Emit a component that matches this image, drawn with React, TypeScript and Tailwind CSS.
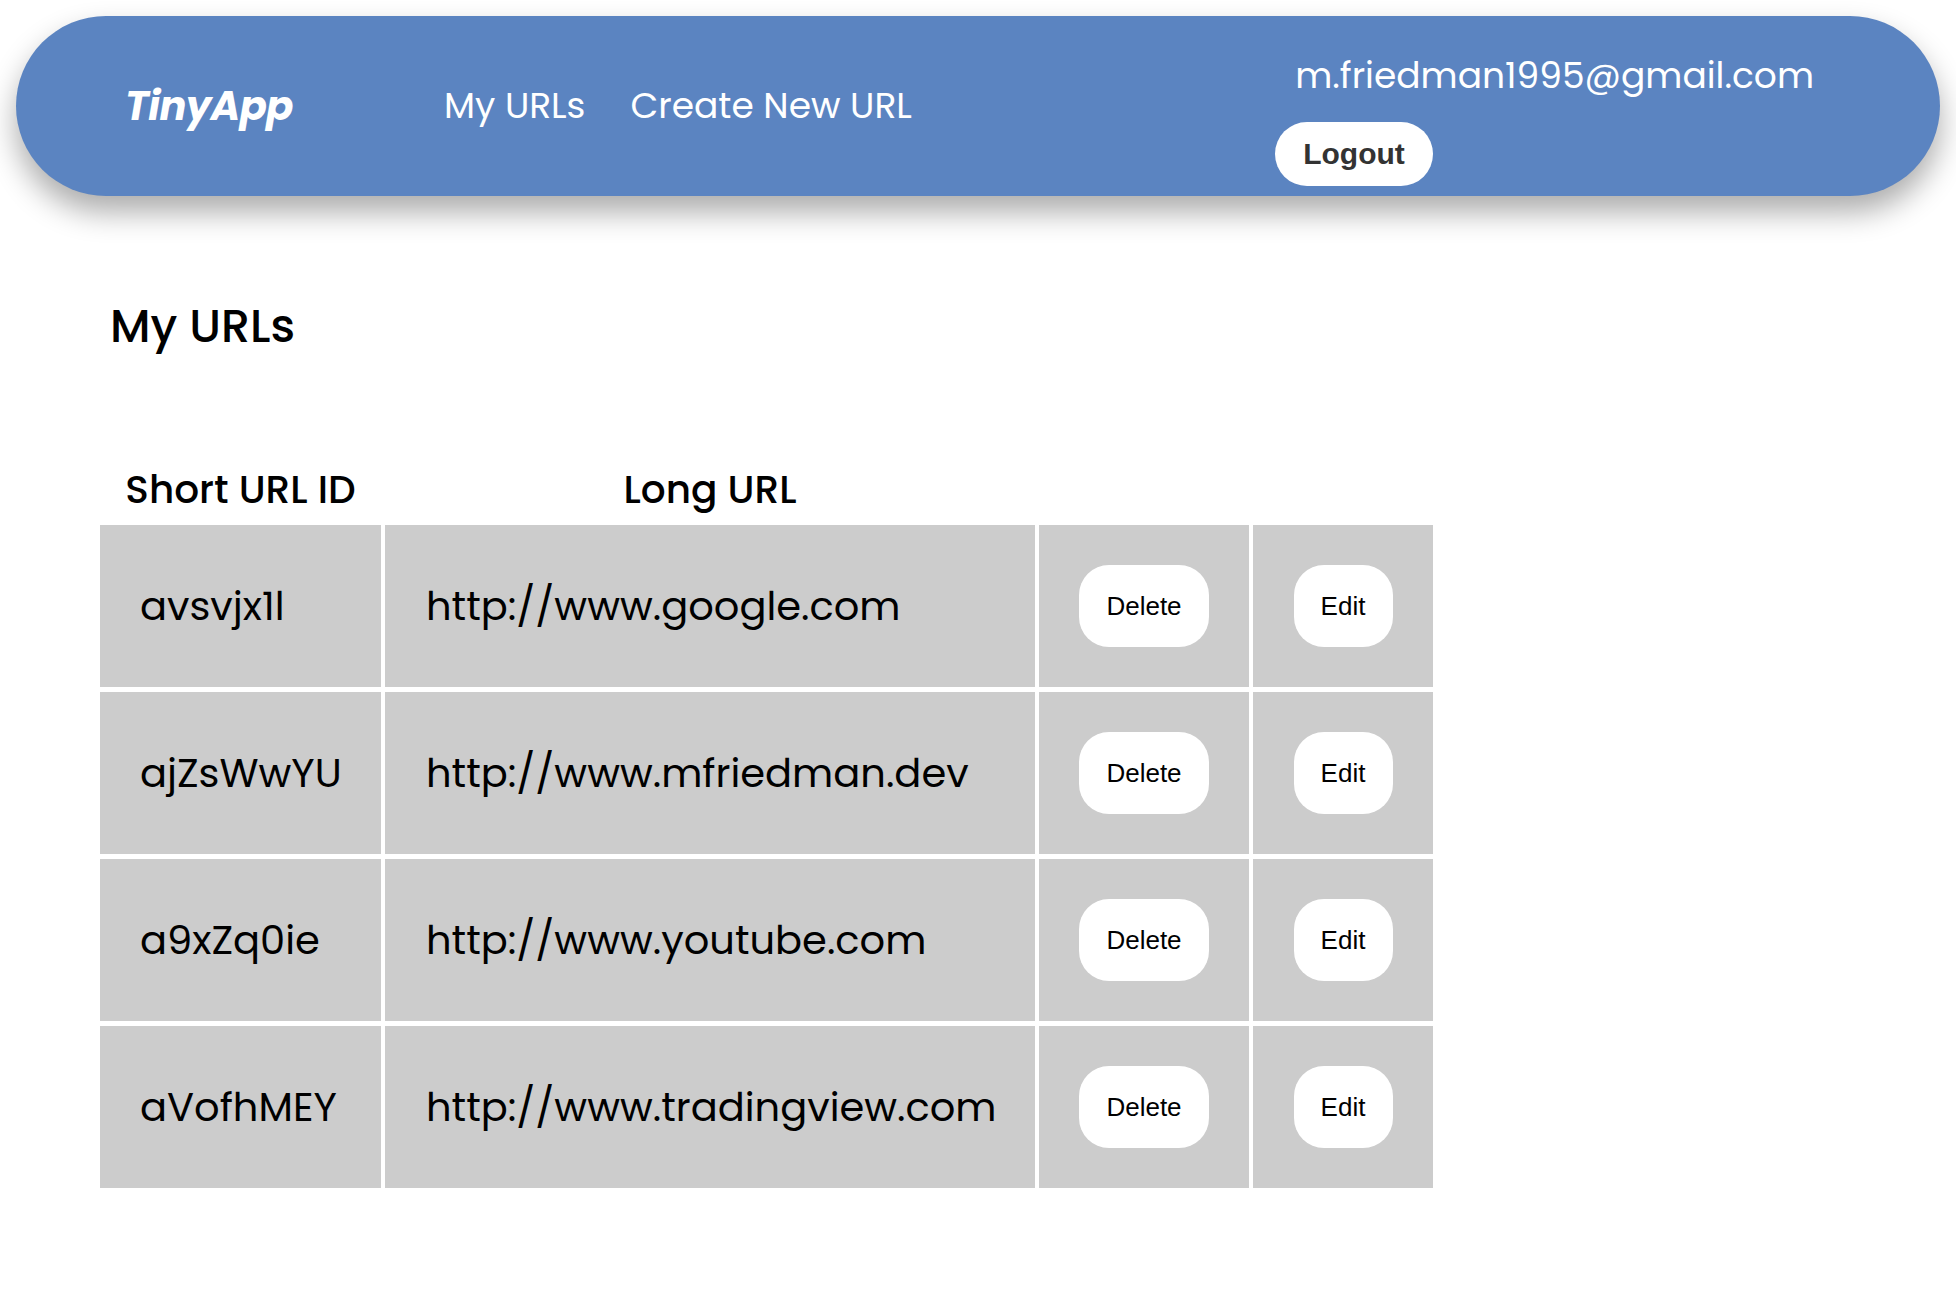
import React from "react";

const rows = [
  { id: "avsvjx1l", url: "http://www.google.com" },
  { id: "ajZsWwYU", url: "http://www.mfriedman.dev" },
  { id: "a9xZq0ie", url: "http://www.youtube.com" },
  { id: "aVofhMEY", url: "http://www.tradingview.com" },
];

const poppins = { fontFamily: '"Poppins", "Open Sans", sans-serif' };
const arial = { fontFamily: '"Liberation Sans", Arial, sans-serif' };

export default function App() {
  return (
    <div className="min-h-[1308px] w-full bg-white text-black" style={poppins}>
      <nav className="mx-4 mt-4 flex h-[180px] items-center rounded-full bg-[#5b84c1] pl-[109px] pr-[126px] text-white shadow-[0_16px_30px_rgba(0,0,0,0.33)]">
        <div className="w-[319px] text-[40px] font-bold italic tracking-[-0.5px]">TinyApp</div>
        <div className="flex items-center gap-[45px] text-[36px]">
          <a href="#">My URLs</a>
          <a href="#">Create New URL</a>
        </div>
        <div className="ml-auto flex flex-col items-start pt-[29px]">
          <div className="pl-[20px] text-[36px] leading-[44px] -translate-y-[2px]">m.friedman1995@gmail.com</div>
          <button
            className="mt-[22px] h-[64px] rounded-full bg-white px-[28px] text-[30px] font-bold text-[#333]"
            style={arial}
          >
            Logout
          </button>
        </div>
      </nav>

      <main className="pl-[96px]">
        <h1 className="mt-[102px] pl-[14px] text-[46px] font-medium leading-[56px]">My URLs</h1>
        <table className="mt-[101px] border-separate border-spacing-x-[4px] border-spacing-y-[5px]">
          <thead>
            <tr className="h-[60px] text-[39px]">
              <th className="w-[281px] p-0 text-center font-medium">Short URL ID</th>
              <th className="w-[650px] p-0 text-center font-medium">Long URL</th>
              <th className="w-[210px] p-0"></th>
              <th className="w-[180px] p-0"></th>
            </tr>
          </thead>
          <tbody>
            {rows.map((r) => (
              <tr key={r.id} className="h-[162px] text-[40px]">
                <td className="bg-[#cccccc] pl-[40px] pr-[10px] text-left">{r.id}</td>
                <td className="bg-[#cccccc] pl-[41px] pr-[10px] text-left">{r.url}</td>
                <td className="bg-[#cccccc] text-center">
                  <button
                    className="h-[82px] w-[130px] rounded-[30px] bg-white text-[26px] text-black"
                    style={arial}
                  >
                    Delete
                  </button>
                </td>
                <td className="bg-[#cccccc] text-center">
                  <button
                    className="h-[82px] w-[99px] rounded-[30px] bg-white text-[26px] text-black"
                    style={arial}
                  >
                    Edit
                  </button>
                </td>
              </tr>
            ))}
          </tbody>
        </table>
      </main>
    </div>
  );
}
